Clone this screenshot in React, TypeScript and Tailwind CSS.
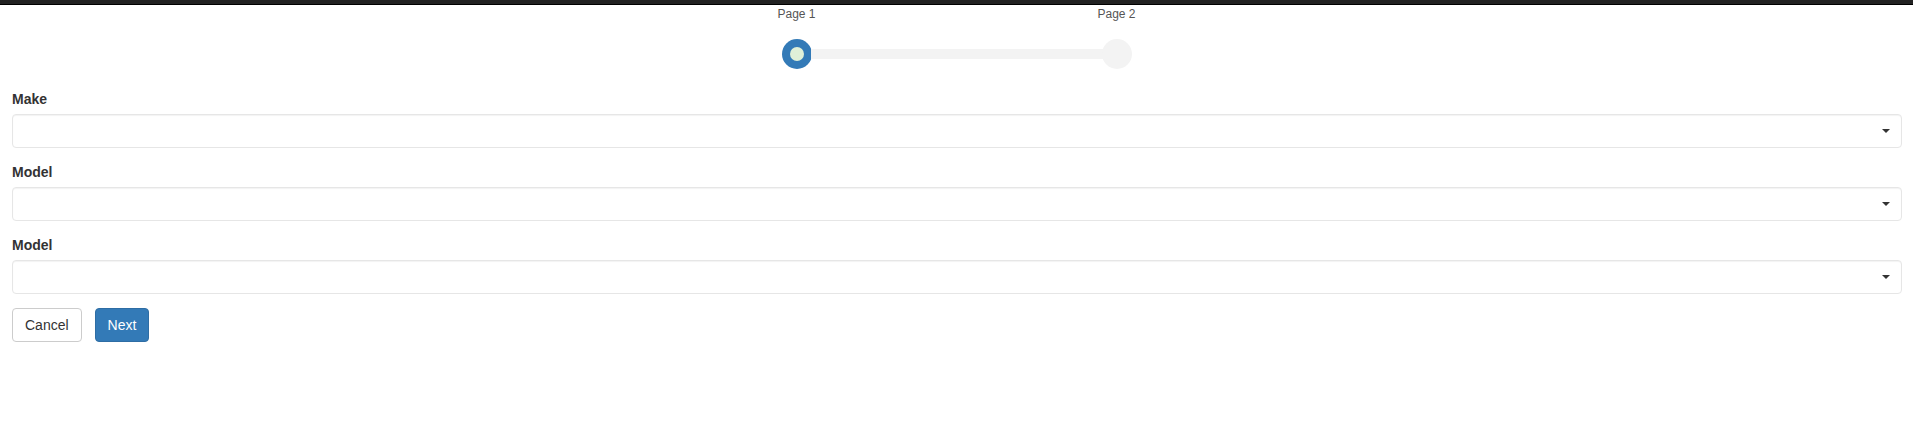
const fields = ["Make", "Model", "Model"];

function SelectBox() {
  return (
    <div className="flex h-[34px] w-full items-center justify-end rounded-[4px] border border-[#e6e6e6] bg-white pr-[11px] shadow-[inset_0_1px_1px_rgba(0,0,0,0.05)]">
      <span className="h-0 w-0 border-x-[4px] border-t-[4px] border-x-transparent border-t-[#333]" />
    </div>
  );
}

function Stepper() {
  return (
    <div className="mx-auto w-[350px]">
      <div className="flex justify-between text-[12px] leading-[17px] text-[#555]">
        <div className="flex w-[30px] justify-center whitespace-nowrap">Page 1</div>
        <div className="flex w-[30px] justify-center whitespace-nowrap">Page 2</div>
      </div>
      <div className="mt-[16px] flex items-center">
        <div className="flex h-[30px] w-[30px] shrink-0 items-center justify-center rounded-full bg-[#337ab7]">
          <div className="h-[14px] w-[14px] rounded-full bg-[#dff0d8]" />
        </div>
        <div className="-mx-px h-[10px] flex-1 bg-[#f3f3f3]" />
        <div className="h-[30px] w-[30px] shrink-0 rounded-full bg-[#f3f3f3]" />
      </div>
    </div>
  );
}

export default function App() {
  return (
    <div className="min-h-[426px] bg-white font-['Liberation_Sans',Arial,sans-serif] text-[14px] text-[#333]">
      <div className="h-[4px] bg-[#222] shadow-[0_1px_0_#000]" />
      <div className="mt-[2px]">
        <Stepper />
      </div>
      <form className="mt-[20px] pl-3 pr-[11px]">
        {fields.map((name, i) => (
          <div key={i} className="mb-[14px]">
            <label className="mb-[5px] block h-[20px] font-bold leading-[20px]">{name}</label>
            <SelectBox />
          </div>
        ))}
        <div className="flex gap-[13px]">
          <button
            type="button"
            className="h-[34px] rounded-[4px] border border-[#ccc] bg-white px-3 leading-[20px] text-[#333]"
          >
            Cancel
          </button>
          <button
            type="button"
            className="h-[34px] rounded-[4px] border border-[#2e6da4] bg-[#337ab7] px-3 leading-[20px] text-white"
          >
            Next
          </button>
        </div>
      </form>
    </div>
  );
}
